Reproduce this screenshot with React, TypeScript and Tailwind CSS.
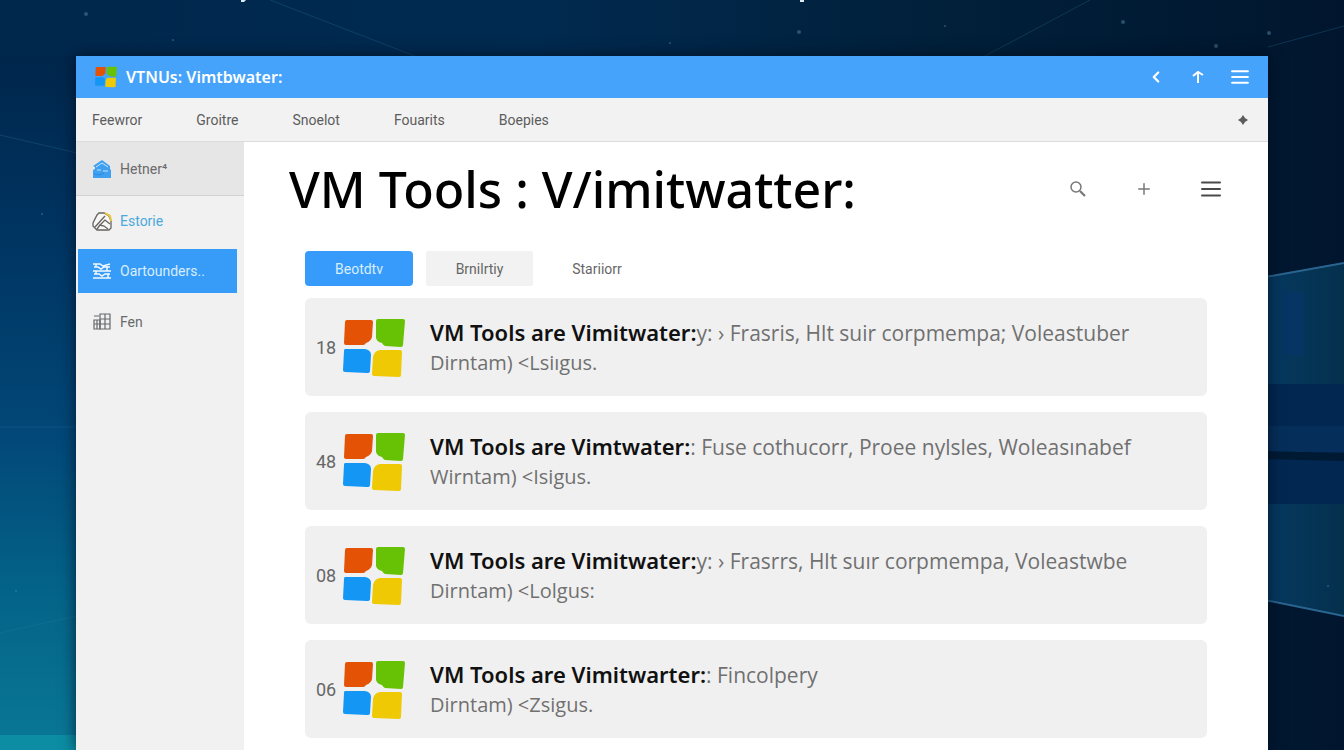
import type { ReactNode } from "react";
import { ChevronLeft, Plus } from "lucide-react";

const menu = ["Feewror", "Groitre", "Snoelot", "Fouarits", "Boepies"];

const tools = [
  {
    id: "18",
    title: "VM Tools are Vimitwater:",
    text: "y: › Frasris, Hlt suir corpmempa; Voleastuber",
    sub: "Dirntam) <Lsiıgus.",
  },
  {
    id: "48",
    title: "VM Tools are Vimtwater:",
    text: ": Fuse cothucorr, Proee nylsles, Woleasınabef",
    sub: "Wirntam) <Isigus.",
  },
  {
    id: "08",
    title: "VM Tools are Vimitwater:",
    text: "y: › Frasrrs, Hlt suır corpmempa, Voleastwbe",
    sub: "Dirntam) <Lolgus:",
  },
  {
    id: "06",
    title: "VM Tools are Vimitwarter:",
    text: ": Fincolpery",
    sub: "Dirntam) <Zsigus.",
  },
];

function WindowsLogo({ className }: { className: string }) {
  return (
    <svg viewBox="0 0 62 58" className={className} aria-hidden="true">
      <path d="M4 1H28Q30 1 30 3L29 18Q28 22 23 24Q22 26 20 26H3Q1 26 1 24L2 3Q2 1 4 1Z" fill="#e35205" />
      <path d="M35 0H60Q62 0 62 2L60 26Q60 28 58 28L42 27Q40 26 39 24Q34 23 33 19V2Q33 0 35 0Z" fill="#67c105" />
      <path d="M2 30H22Q28 31 28 36L27 52Q27 54 24 54L2 53Q0 53 0 51L1 32Q1 30 2 30Z" fill="#1496f5" />
      <path d="M37 31H57Q59 31 59 33L58 56Q58 58 56 58L31 57Q29 57 29 55L30 38Q31 32 37 31Z" fill="#efc903" />
    </svg>
  );
}

function HomeIcon() {
  return (
    <svg viewBox="0 0 20 20" className="size-5" aria-hidden="true">
      <path d="M1 7 10 1 18 7V10L19 11V19H1V11L3 10V8Z" fill="#3f9ff0" />
      <path d="M4 8 10 4 16 8M5 11H9M11 12H16" fill="none" stroke="#c7e5fc" strokeWidth="1" />
      <path d="M2 15 7 16 12 14" fill="none" stroke="#2c8be0" strokeWidth="1" />
    </svg>
  );
}

function PencilIcon() {
  return (
    <svg viewBox="0 0 20 20" className="size-5" fill="none" stroke="#66625e" strokeWidth="1.3" aria-hidden="true">
      <path d="M7 2H12L17 5 19 10V17L17 19H5L1 15V12L5 4Z" fill="#f7f7f5" />
      <path d="M3 16 13 5M7 15 13 9 18 13M5 18 8 14 12 15 16 18" />
      <path d="M13 2 18 5 19 10" stroke="#e8c53a" strokeWidth="2" />
    </svg>
  );
}

function BoardIcon() {
  return (
    <svg viewBox="0 0 20 18" className="h-[18px] w-5" fill="none" stroke="#f2faff" strokeWidth="1.5" aria-hidden="true">
      <path d="M1 2H8L11 4 18 2M1 9H19M1 16H19M2 5H6L9 7 12 5H18M2 12H7L10 14 13 12H18" />
      <path d="M4 2V5M15 4V9M4 9V12M16 12V16" />
    </svg>
  );
}

function BlocksIcon() {
  return (
    <svg viewBox="0 0 20 18" className="h-[18px] w-5" fill="none" stroke="#66686b" strokeWidth="1.2" aria-hidden="true">
      <path d="M8 1H18V16H8ZM8 6H18M8 11H18M13 1V16" />
      <path d="M2 7H8V16H2ZM2 11H8M5 7V16M2 3H7" />
    </svg>
  );
}

function MenuLines({ className, weight }: { className: string; weight: number }) {
  return (
    <svg viewBox="0 0 20 16" className={className} stroke="currentColor" strokeWidth={weight} strokeLinecap="round" aria-hidden="true">
      <path d="M1 1.5H19M1 8H19M1 14.5H19" />
    </svg>
  );
}

function SideItem({ icon, label, className }: { icon: ReactNode; label: string; className: string }) {
  return (
    <button type="button" className={`flex items-center gap-2 text-left text-sm ${className}`}>
      {icon}
      {label}
    </button>
  );
}

function Wallpaper() {
  return (
    <svg
      className="absolute inset-0 size-full"
      viewBox="0 0 1344 750"
      preserveAspectRatio="none"
      aria-hidden="true"
    >
      <defs>
        <linearGradient id="sky" x1="0" x2="1" y1="0" y2="0">
          <stop offset="0" stopColor="#00284d" />
          <stop offset="0.4" stopColor="#012a50" />
          <stop offset="0.7" stopColor="#01203a" />
          <stop offset="1" stopColor="#01162e" />
        </linearGradient>
        <linearGradient id="glow" x1="0" x2="0" y1="0" y2="1">
          <stop offset="0" stopColor="#00264b" />
          <stop offset="0.25" stopColor="#003461" />
          <stop offset="0.55" stopColor="#024878" />
          <stop offset="0.78" stopColor="#046489" />
          <stop offset="1" stopColor="#0a7896" />
        </linearGradient>
        <linearGradient id="pane" x1="0" x2="1" y1="0" y2="0">
          <stop offset="0" stopColor="#063a63" />
          <stop offset="1" stopColor="#04304c" />
        </linearGradient>
      </defs>
      <rect width="1344" height="750" fill="url(#sky)" />
      <rect y="56" width="90" height="694" fill="url(#glow)" />
      <rect y="735" width="90" height="15" fill="#0c8da3" />
      <g stroke="#2e77a3" strokeOpacity="0.3" fill="none">
        <path d="M0 135 90 156M0 427H90M0 633 90 613M270 0 420 58M1090 0 985 56M1268 47 1344 26" />
      </g>
      <path d="M1260 278 1344 263V616L1260 599Z" fill="url(#pane)" />
      <path d="M1260 384H1344V504H1260Z" fill="#022852" />
      <path d="M1260 426H1344V452H1260Z" fill="#052f5a" />
      <path d="M1282 292H1304V355H1282Z" fill="#063463" />
      <path d="M1260 451 1344 453V461L1260 459Z" fill="#011a34" />
      <path d="M1260 278 1344 263M1260 599 1344 616" stroke="#2a6590" strokeWidth="2" />
      <g fill="#5d8fb0" fillOpacity="0.45">
        <circle cx="86" cy="14" r="2" />
        <circle cx="173" cy="40" r="1" />
        <circle cx="42" cy="214" r="1" />
        <circle cx="16" cy="591" r="1" />
        <circle cx="670" cy="43" r="1" />
        <circle cx="799" cy="32" r="2" />
        <circle cx="945" cy="26" r="1" />
        <circle cx="1123" cy="22" r="2" />
        <circle cx="1216" cy="46" r="2" />
        <circle cx="1269" cy="33" r="2" />
        <circle cx="1328" cy="586" r="1" />
      </g>
      <path d="M241 0H246L244 2H241ZM800 0H804V2H800Z" fill="#d9ecf5" />
    </svg>
  );
}

export default function App() {
  return (
    <div className="relative flex h-screen flex-col overflow-hidden bg-[#01203d] px-19 pt-14 font-['Roboto','Liberation_Sans',sans-serif]">
      <Wallpaper />

      <div className="relative flex flex-1 flex-col bg-white shadow-[0_0_14px_rgba(0,10,25,0.7)]">
        <header className="flex h-[42px] shrink-0 items-center justify-between bg-[#45a3fb] px-[18px] text-white">
          <div className="flex items-center gap-2">
            <WindowsLogo className="size-6 p-px" />
            <span className="font-['Noto_Sans',sans-serif] text-base font-semibold">VTNUs: Vimtbwater:</span>
          </div>
          <div className="flex items-center gap-[22px]">
            <button type="button" aria-label="Back" className="flex w-5 justify-center">
              <ChevronLeft className="size-[18px]" strokeWidth={3} />
            </button>
            <button type="button" aria-label="Up" className="flex w-5 justify-center">
              <svg viewBox="0 0 14 14" className="size-[14px]" fill="none" stroke="currentColor" strokeWidth="2" aria-hidden="true">
                <path d="M7 13V2M2 6 7 2 12 5" />
              </svg>
            </button>
            <button type="button" aria-label="Window menu" className="flex w-5 justify-center">
              <MenuLines className="h-[14px] w-[18px]" weight={2.4} />
            </button>
          </div>
        </header>

        <nav className="flex h-[44px] shrink-0 items-center justify-between border-b border-[#dcdcdc] bg-[#f2f2f2] pr-5 pl-4 text-[#5c5c5c]">
          <div className="flex gap-[54px]">
            {menu.map((item) => (
              <button key={item} type="button" className="text-sm">
                {item}
              </button>
            ))}
          </div>
          <button type="button" aria-label="Add">
            <svg viewBox="0 0 10 10" className="size-[10px]" fill="#5c5c5c" aria-hidden="true">
              <path d="M5 0 7 3 10 5 7 7 5 10 3 7 0 5 3 3Z" />
            </svg>
          </button>
        </nav>

        <div className="flex flex-1">
          <aside className="flex w-42 shrink-0 flex-col bg-[#f1f1f1]">
            <SideItem
              icon={<HomeIcon />}
              label="Hetner⁴"
              className="h-[54px] border-b border-[#d2d2d2] bg-[#e6e6e6] pl-4 text-[#6a6a6a]"
            />
            <SideItem icon={<PencilIcon />} label="Estorie" className="h-[53px] pb-1 pl-4 text-[#4ba9dd]" />
            <SideItem
              icon={<BoardIcon />}
              label="Oartounders.."
              className="mr-[7px] ml-[2px] h-11 bg-[#379bf8] pl-[14px] text-[#d8eeff]"
            />
            <SideItem icon={<BlocksIcon />} label="Fen" className="h-[58px] pl-4 text-[#6a6a6a]" />
          </aside>

          <main className="min-w-0 flex-1 px-[61px]">
            <div className="-mx-4 flex h-[109px] items-start justify-between pt-3">
              <h1 className="font-['Noto_Sans',sans-serif] text-[50px] leading-[70px] font-medium whitespace-nowrap text-black">
                VM Tools : V/imitwatter:
              </h1>
              <div className="flex h-[70px] items-center gap-12 pr-[2px] text-[#777]">
                <button type="button" aria-label="Search">
                  <svg viewBox="0 0 18 18" className="size-[18px]" fill="none" stroke="currentColor" aria-hidden="true">
                    <circle cx="7" cy="7" r="5" strokeWidth="1.5" />
                    <path d="M11 11 16 16" strokeWidth="2.2" />
                  </svg>
                </button>
                <button type="button" aria-label="New">
                  <Plus className="size-[18px]" strokeWidth={2} />
                </button>
                <button type="button" aria-label="Options" className="text-[#4a4a4a]">
                  <MenuLines className="h-4 w-5" weight={2} />
                </button>
              </div>
            </div>

            <div className="flex gap-[13px] text-sm text-[#666]">
              <button type="button" className="h-[35px] w-[108px] rounded bg-[#369bfa] text-[#d8eeff]">
                Beotdtv
              </button>
              <button type="button" className="h-[35px] w-[107px] rounded-xs bg-[#f2f2f2]">
                Brnilrtiy
              </button>
              <button type="button" className="h-[35px] w-[102px]">
                Stariiorr
              </button>
            </div>

            <ul className="mt-3 flex flex-col gap-4">
              {tools.map((tool) => (
                <li key={tool.id} className="flex items-center rounded-md bg-[#f0f0f0] pt-5 pb-[18px] pl-[11px]">
                  <span className="w-[27px] text-lg text-[#666]">{tool.id}</span>
                  <WindowsLogo className="h-[58px] w-[62px] shrink-0" />
                  <div className="ml-[25px] font-['Open_Sans',sans-serif] whitespace-nowrap text-[#707070]">
                    <p className="text-[21px] leading-[30px]">
                      <strong className="font-['Noto_Sans',sans-serif] text-[22px] leading-none font-semibold text-[#111]">
                        {tool.title}
                      </strong>
                      {tool.text}
                    </p>
                    <p className="text-xl leading-[30px]">{tool.sub}</p>
                  </div>
                </li>
              ))}
            </ul>
          </main>
        </div>
      </div>
    </div>
  );
}
